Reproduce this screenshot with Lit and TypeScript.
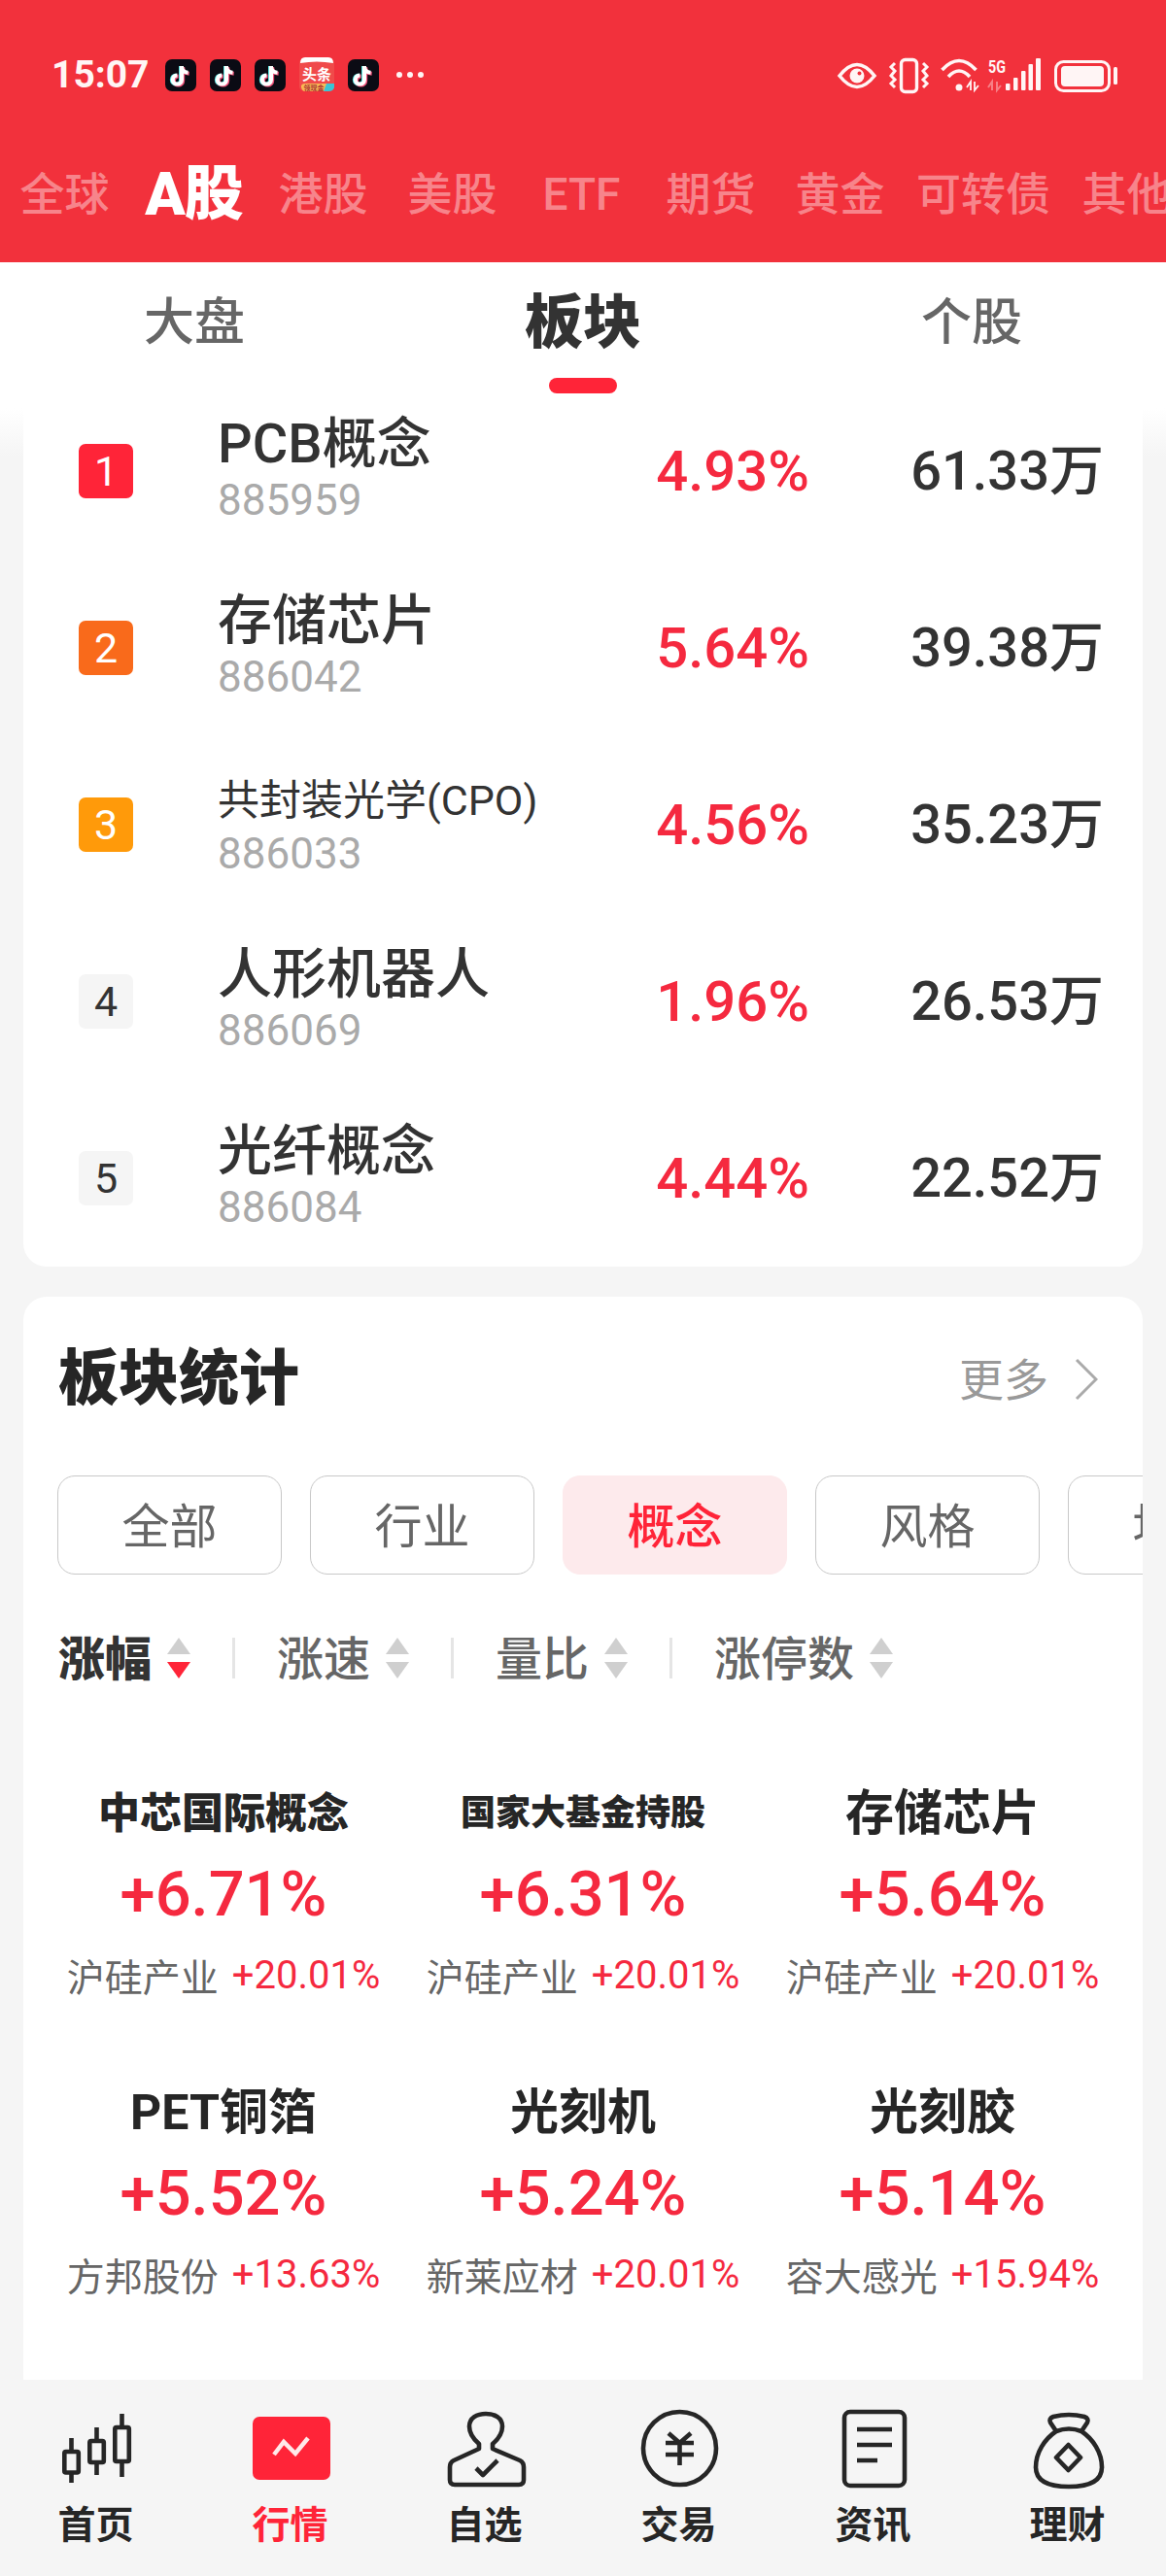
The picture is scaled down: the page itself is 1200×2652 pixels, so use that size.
import { LitElement, html, css, svg } from "lit";
import { customElement } from "lit/decorators.js";
import { classMap } from "lit/directives/class-map.js";

const topTabs = ["全球", "A股", "港股", "美股", "ETF", "期货", "黄金", "可转债", "其他"];
const subTabs = ["大盘", "板块", "个股"];
const rows = [
  { name: "PCB概念", code: "885959", pct: "4.93%", amt: "61.33万" },
  { name: "存储芯片", code: "886042", pct: "5.64%", amt: "39.38万" },
  { name: "共封装光学(CPO)", code: "886033", pct: "4.56%", amt: "35.23万", small: true },
  { name: "人形机器人", code: "886069", pct: "1.96%", amt: "26.53万" },
  { name: "光纤概念", code: "886084", pct: "4.44%", amt: "22.52万" },
];
const chips = ["全部", "行业", "概念", "风格", "地域"];
const sorts = ["涨幅", "涨速", "量比", "涨停数"];
const cells = [
  { n: "中芯国际概念", s: "n6", v: "+6.71%", l: "沪硅产业", p: "+20.01%" },
  { n: "国家大基金持股", s: "n7", v: "+6.31%", l: "沪硅产业", p: "+20.01%" },
  { n: "存储芯片", s: "", v: "+5.64%", l: "沪硅产业", p: "+20.01%" },
  { n: "PET铜箔", s: "", v: "+5.52%", l: "方邦股份", p: "+13.63%" },
  { n: "光刻机", s: "", v: "+5.24%", l: "新莱应材", p: "+20.01%" },
  { n: "光刻胶", s: "", v: "+5.14%", l: "容大感光", p: "+15.94%" },
];

const tiktok = html`<svg class="tt" viewBox="0 0 32 33" width="32" height="33">
  <rect width="32" height="33" rx="7" fill="#0b0b14"></rect>
  <g fill="none" stroke-width="4">
    <path d="M17 7V21a4.600 4.600 0 1 1-4.600-4.600M17 8c.5 3.500 3 5.500 6.500 5.800" stroke="#5fe8e4" transform="translate(-1 0)"></path>
    <path d="M17 7V21a4.600 4.600 0 1 1-4.600-4.600M17 8c.5 3.500 3 5.500 6.500 5.800" stroke="#f0527a" transform="translate(1.200 1)"></path>
    <path d="M17 7V21a4.600 4.600 0 1 1-4.600-4.600M17 8c.5 3.500 3 5.500 6.500 5.800" stroke="#fff"></path>
  </g>
</svg>`;

const toutiao = html`<svg class="tt" viewBox="0 0 36 36" width="36" height="36">
  <rect y="1" width="36" height="34" rx="5" fill="#f04a4a"></rect>
  <path d="M1 6Q1 0 6 0H30Q35 0 35 6Q18 3 1 6Z" fill="#fff"></path>
  <text x="18" y="23" text-anchor="middle" class="ttx">头条</text>
  <path d="M2 29Q3 27 6 27H30L26 35H6Q3 35 2 31Z" fill="#f7b955"></path>
  <path d="M28 27H36V31Q35 35 30 35H25Z" fill="#3cc4d4"></path>
  <text x="15" y="34" text-anchor="middle" class="ttxs">领现金</text>
</svg>`;

const statusRight = html`<svg class="sr" viewBox="858 54 296 44" width="296" height="44" fill="none" stroke="#fff5f5">
  <path d="M864 77Q882 54 900 77Q882 100 864 77Z" stroke-width="3.600"></path>
  <circle cx="882" cy="77" r="7.500" fill="#fff5f5" stroke="none"></circle>
  <circle cx="884.500" cy="74.500" r="2" fill="#f2313c" stroke="none"></circle>
  <rect x="927.500" y="60.500" width="16" height="33" rx="4" stroke-width="3.400"></rect>
  <path d="M921 64l-4 4 4 4-4 5 4 4-4 4 4 4" stroke-width="3"></path>
  <path d="M950 64l4 4-4 4 4 5-4 4 4 4-4 4" stroke-width="3"></path>
  <path d="M969.500 71Q987 52 1004.500 71" stroke-width="3.600"></path>
  <path d="M976 78Q987 66 998 78" stroke-width="3.600"></path>
  <circle cx="987" cy="89" r="3.500" fill="#fff5f5" stroke="none"></circle>
  <path d="M999 92V83L995 89M1003 83V92L1007 87" stroke-width="1.800"></path>
  <text x="1017" y="74" class="fg" textLength="18" lengthAdjust="spacingAndGlyphs">5G</text>
  <path d="M1021 92V83L1017 89M1026 83V92L1030 87" stroke-width="2" opacity=".4"></path>
  <g fill="#fff5f5" stroke="none">
    <rect x="1035" y="85" width="4.500" height="7" rx="1"></rect>
    <rect x="1043" y="79" width="4.500" height="13" rx="1"></rect>
    <rect x="1051" y="72" width="4.500" height="20" rx="1"></rect>
    <rect x="1058.500" y="65" width="4.500" height="27" rx="1"></rect>
    <rect x="1066" y="59" width="5" height="33" rx="1"></rect>
  </g>
  <rect x="1086.500" y="62.500" width="55" height="30" rx="8" stroke-width="3"></rect>
  <rect x="1092" y="67" width="44" height="21" rx="4" fill="#fff5f5" stroke="none"></rect>
  <rect x="1146" y="68" width="4" height="18" rx="1.500" fill="#fff5f5" stroke="none"></rect>
</svg>`;

const chev = (active: boolean) => html`<svg class="arr" viewBox="0 0 24 42" width="24" height="42">
  <path d="M0 17L12 0L24 17Z" fill="#cfcfcf"></path>
  <path d="M0 25H24L12 42Z" fill=${active ? "#ff2438" : "#cfcfcf"}></path>
</svg>`;

const navIcons = [
  svg`<g fill="none" stroke="#262626" stroke-width="4.600" stroke-linecap="butt" stroke-linejoin="round">
    <path d="M73.500 2510V2522M73.500 2547V2556M99.500 2499V2511M99.500 2537V2548M125.500 2485V2497M125.500 2536V2550"></path>
    <rect x="66.300" y="2524" width="14.500" height="21.500" rx="1.500"></rect>
    <rect x="92.300" y="2513" width="14.500" height="22" rx="1.500"></rect>
    <rect x="118.300" y="2499" width="14.500" height="35" rx="1.500"></rect>
  </g>`,
  svg`<rect x="260" y="2488" width="80" height="65" rx="7" fill="#ff2438"></rect>
    <path d="M282 2527L292 2514L304 2526L317 2510" fill="none" stroke="#ffe9e9" stroke-width="4.500"></path>`,
  svg`<g fill="none" stroke="#262626" stroke-width="4.600" stroke-linejoin="round">
    <path d="M493 2516V2521L467 2533Q463 2535 463 2540V2553Q463 2558 468 2558H534Q539 2558 539 2553V2540Q539 2535 535 2533L507 2521V2516C514 2510 517 2504 517 2498C517 2489 509 2485 500 2485C491 2485 483 2489 483 2498C483 2504 486 2510 493 2516Z"></path>
    <path d="M490 2541L497 2548L512 2533"></path>
  </g>`,
  svg`<g fill="none" stroke="#262626" stroke-width="4.600">
    <circle cx="699.500" cy="2520.500" r="37.500"></circle>
    <path d="M688 2505L699.500 2515L711 2505M685 2515H714M685 2527H714M699.500 2515V2538"></path>
  </g>`,
  svg`<g fill="none" stroke="#262626" stroke-width="4.600">
    <rect x="869" y="2483" width="62" height="76" rx="6"></rect>
    <path d="M882 2501H918M882 2517H918M882 2533H903"></path>
  </g>`,
  svg`<g fill="none" stroke="#262626" stroke-width="4.600" stroke-linejoin="round">
    <path d="M1087 2503L1081 2494Q1079 2490 1084 2488Q1100 2484 1116 2488Q1121 2490 1119 2494L1113 2503"></path>
    <path d="M1087 2503Q1100 2498 1113 2503C1125 2511 1134 2525 1134 2540C1134 2554 1122 2560 1100 2560C1078 2560 1066 2554 1066 2540C1066 2525 1075 2511 1087 2503Z"></path>
    <path d="M1099.500 2517L1112 2530L1099.500 2543L1087 2530Z"></path>
  </g>`,
];
const navLabels = ["首页", "行情", "自选", "交易", "资讯", "理财"];

@customElement("app-root")
export class AppRoot extends LitElement {
  static styles = css`
    :host {
      display: flex;
      flex-direction: column;
      width: 1200px;
      height: 2652px;
      overflow: hidden;
      background: #f5f5f5;
      font-family: Roboto, "Noto Sans CJK SC", sans-serif;
      color: #333;
    }
    .header { background: #f2313c; height: 270px; padding-top: 57px; box-sizing: border-box; flex: none; }
    .status { display: flex; align-items: center; height: 40px; padding: 0 46px 0 53px; }
    .time { font-size: 39px; font-weight: 700; color: #fff5f5; width: 117px; }
    .notif { display: flex; align-items: center; gap: 14px; }
    .tt { display: block; flex: none; }
    .ttx { font: 700 15px "Noto Sans CJK SC", sans-serif; fill: #fff; }
    .ttxs { font: 700 7px "Noto Sans CJK SC", sans-serif; fill: #a33; }
    .dots { display: flex; gap: 5px; margin-left: 4px; }
    .dots i { width: 6px; height: 6px; border-radius: 50%; background: #fff5f5; }
    .sr { margin-left: auto; display: block; }
    .fg { font: 700 19px Roboto, sans-serif; fill: #fff5f5; stroke: none; }
    .tabs { display: flex; align-items: center; height: 80px; margin-top: 63px; overflow: hidden; white-space: nowrap; }
    .tab { width: 133px; text-align: center; font-size: 46px; font-weight: 500; color: rgba(255, 255, 255, .42); flex: none; line-height: 80px; }
    .tab.wide { width: 162px; }
    .tab.on { font-size: 61px; font-weight: 900; color: #fff; letter-spacing: -1px; }

    .sub { display: flex; height: 150px; background: #fff; flex: none; position: relative; z-index: 2; }
    .sub div { flex: 1; text-align: center; font-size: 52px; font-weight: 500; color: #666; line-height: 126px; position: relative; }
    .sub div.on { font-size: 60px; font-weight: 900; color: #333; line-height: 126px; }
    .sub div.on::after { content: ""; position: absolute; left: 165px; width: 70px; height: 16px; top: 119px; border-radius: 8px; background: #ff2438; }

    .scroll { flex: 1; min-height: 0; overflow: hidden; padding: 0 24px; background: linear-gradient(#fff, #f5f5f5 50px); }
    .card { background: #fff; }
    .list { margin-top: -26px; border-radius: 0 0 24px 24px; }
    .row { display: flex; align-items: center; height: 182px; padding: 0 40px 0 57px; }
    .rank { width: 56px; height: 56px; border-radius: 7px; display: flex; align-items: center; justify-content: center; font-size: 43px; color: #333; background: #f5f5f5; flex: none; margin-right: 87px; }
    .r1 { background: #ff2438; color: #fff; }
    .r2 { background: #f96a1b; color: #fff; }
    .r3 { background: #ff9a0a; color: #fff; }
    .nm { flex: 1; min-width: 0; }
    .nm b { display: block; font-size: 56px; font-weight: 500; line-height: 54px; height: 60px; white-space: nowrap; color: #333; }
    .nm b.small { font-size: 43px; font-weight: 400; line-height: 60px; }
    .nm span { display: block; font-size: 44px; line-height: 50px; color: #aaa; }
    .pct { font-size: 58px; font-weight: 500; color: #f5293f; text-align: right; line-height: 70px; margin-right: 2px; }
    .amt { font-size: 56px; font-weight: 500; color: #333; width: 301px; text-align: right; flex: none; line-height: 70px; }

    .stats { margin-top: 31px; border-radius: 24px 24px 0 0; padding-top: 35px; height: 1200px; }
    .head { display: flex; align-items: center; height: 100px; padding: 0 46px 0 36px; }
    .head h2 { margin: 0; flex: 1; font-size: 62px; font-weight: 900; color: #262626; line-height: 80px; }
    .more { font-size: 46px; color: #999; padding-bottom: 6px; }
    .head svg { margin-left: 27px; display: block; }
    .chips { display: flex; gap: 29px; margin-top: 49px; padding-left: 35px; overflow: hidden; }
    .chip { flex: none; box-sizing: border-box; width: 231px; height: 102px; border: 1px solid #c8c8c8; border-radius: 18px; display: flex; align-items: center; justify-content: center; font-size: 49px; color: #666; padding-bottom: 6px; }
    .chip.on { background: #fdeaec; border-color: #fdeaec; color: #ff2438; font-weight: 500; }
    .sorts { display: flex; align-items: center; height: 60px; margin-top: 56px; padding-left: 36px; }
    .sort { display: flex; align-items: center; gap: 16px; font-size: 48px; color: #666; font-weight: 500; }
    .sort span { padding-bottom: 6px; }
    .sort.on { font-weight: 900; color: #333; }
    .arr { display: block; }
    .sep { width: 3px; height: 42px; background: #e5e5e5; margin: 0 43px 0 43px; }
    .grid { display: grid; grid-template-columns: repeat(3, 370px); row-gap: 78px; margin: 98px 0 0 21px; }
    .cell { text-align: center; }
    .cell .n { height: 60px; line-height: 64px; font-size: 50px; font-weight: 700; color: #262626; white-space: nowrap; }
    .cell .n.n6 { font-size: 43px; font-weight: 900; }
    .cell .n.n7 { font-size: 36px; font-weight: 900; }
    .cell .v { height: 106px; line-height: 110px; font-size: 65px; font-weight: 500; color: #f5293f; }
    .cell .s { height: 64px; display: flex; align-items: center; justify-content: center; gap: 14px; font-size: 39px; color: #666; white-space: nowrap; }
    .cell .s em { font-style: normal; font-size: 40px; color: #f5293f; }

    .nav { display: flex; height: 202px; background: #f5f5f5; flex: none; position: relative; z-index: 2; }
    .nav div { width: 200px; display: flex; flex-direction: column; align-items: center; font-size: 39px; font-weight: 700; color: #262626; }
    .nav div.on { color: #ff2438; }
    .nav svg { display: block; margin-top: 26px; }
    .nav span { line-height: 50px; margin: 9px 3px 0 0; }
  `;

  render() {
    return html`
      <div class="header">
        <div class="status">
          <span class="time">15:07</span>
          <div class="notif">
            ${tiktok}${tiktok}${tiktok}${toutiao}${tiktok}
            <span class="dots"><i></i><i></i><i></i></span>
          </div>
          ${statusRight}
        </div>
        <div class="tabs">
          ${topTabs.map((t) => html`<span class=${classMap({ tab: true, on: t === "A股", wide: t === "可转债" })}>${t}</span>`)}
        </div>
      </div>
      <div class="sub">
        ${subTabs.map((t) => html`<div class=${t === "板块" ? "on" : ""}>${t}</div>`)}
      </div>
      <div class="scroll">
        <div class="card list">
          ${rows.map(
            (r, i) => html`<div class="row">
              <span class="rank r${i + 1}">${i + 1}</span>
              <div class="nm"><b class=${r.small ? "small" : ""}>${r.name}</b><span>${r.code}</span></div>
              <span class="pct">${r.pct}</span>
              <span class="amt">${r.amt}</span>
            </div>`
          )}
        </div>
        <div class="card stats">
          <div class="head">
            <h2>板块统计</h2>
            <span class="more">更多</span>
            <svg viewBox="0 0 24 44" width="24" height="44" fill="none" stroke="#aaa" stroke-width="3"><path d="M2 2L22 22L2 42"></path></svg>
          </div>
          <div class="chips">
            ${chips.map((c) => html`<div class=${classMap({ chip: true, on: c === "概念" })}>${c}</div>`)}
          </div>
          <div class="sorts">
            ${sorts.map(
              (s, i) => html`${i ? html`<i class="sep"></i>` : ""}
                <div class=${classMap({ sort: true, on: i === 0 })}><span>${s}</span>${chev(i === 0)}</div>`
            )}
          </div>
          <div class="grid">
            ${cells.map(
              (c) => html`<div class="cell">
                <div class="n ${c.s}">${c.n}</div>
                <div class="v">${c.v}</div>
                <div class="s">${c.l}<em>${c.p}</em></div>
              </div>`
            )}
          </div>
        </div>
      </div>
      <div class="nav">
        ${navLabels.map(
          (l, i) => html`<div class=${i === 1 ? "on" : ""}>
            <svg viewBox="${i * 200} 2476 200 90" width="200" height="90">${navIcons[i]}</svg>
            <span>${l}</span>
          </div>`
        )}
      </div>
    `;
  }
}
